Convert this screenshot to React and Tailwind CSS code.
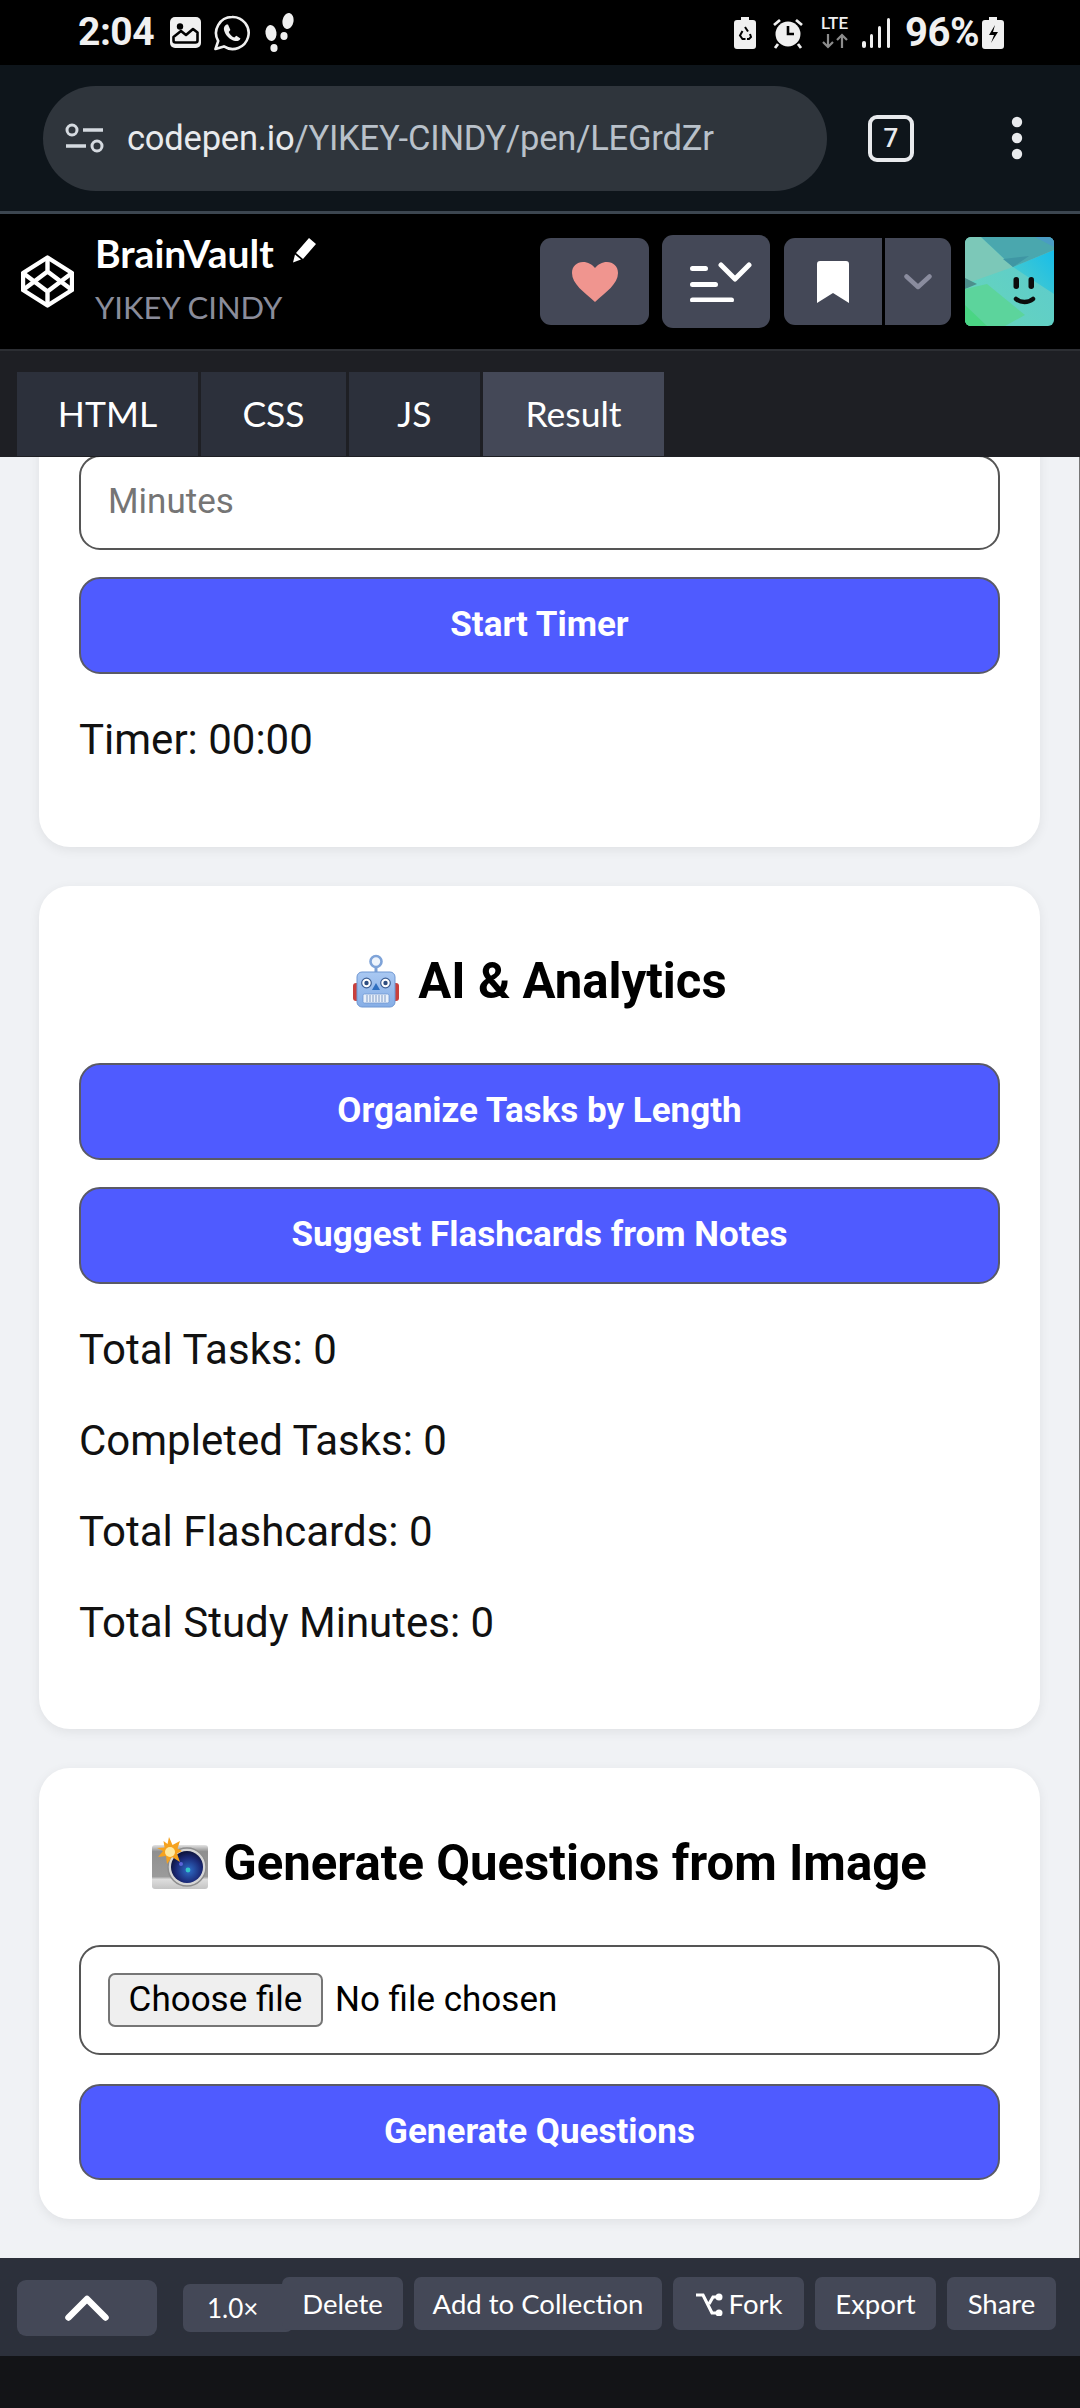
import React from "react";

const lato = "font-['Lato','Liberation_Sans',sans-serif]";
const roboto = "font-['Roboto','Liberation_Sans',sans-serif]";

function Robot() {
  return (
    <svg width="48" height="54" viewBox="0 0 48 54" className="shrink-0">
      <defs>
        <linearGradient id="rb" x1="0" y1="0" x2="0" y2="1"><stop offset="0" stopColor="#a9c8f2" /><stop offset="1" stopColor="#86aee6" /></linearGradient>
      </defs>
      <rect x="1" y="29" width="7" height="18" rx="3" fill="#c9403c" />
      <rect x="40" y="29" width="7" height="18" rx="3" fill="#c9403c" />
      <rect x="22.5" y="12" width="3" height="8" fill="#7c9fd4" />
      <circle cx="24" cy="7.5" r="5.5" fill="#eef4fc" stroke="#7ea3d8" strokeWidth="2.6" />
      <rect x="5" y="18" width="38" height="35" rx="5" fill="url(#rb)" stroke="#6f97d2" strokeWidth="1" />
      <circle cx="14.5" cy="29" r="4.8" fill="#fff" stroke="#3d5f94" strokeWidth="1.2" />
      <circle cx="14.5" cy="29" r="2.2" fill="#2f4e80" />
      <circle cx="33.5" cy="29" r="4.8" fill="#fff" stroke="#3d5f94" strokeWidth="1.2" />
      <circle cx="33.5" cy="29" r="2.2" fill="#2f4e80" />
      <path d="M24 29l4 7h-8z" fill="#2f6fc0" />
      <rect x="11" y="40" width="26" height="9" rx="1.5" fill="#e9f0fa" stroke="#6f97d2" strokeWidth=".8" />
      <path d="M15 41v7M18 41v7M21 41v7M24 41v7M27 41v7M30 41v7M33 41v7" stroke="#7f9bc6" strokeWidth="1" />
    </svg>
  );
}

function Camera() {
  return (
    <svg width="56" height="52" viewBox="0 0 56 52" className="shrink-0">
      <defs>
        <linearGradient id="cb" x1="0" y1="0" x2="0" y2="1"><stop offset="0" stopColor="#e4e4e4" /><stop offset=".15" stopColor="#8f8f8f" /><stop offset=".72" stopColor="#9b9b9b" /><stop offset=".78" stopColor="#dedede" /><stop offset="1" stopColor="#c4c4c4" /></linearGradient>
        <radialGradient id="cl" cx=".55" cy=".6" r=".6"><stop offset="0" stopColor="#2f6fc9" /><stop offset=".65" stopColor="#1b2a78" /><stop offset="1" stopColor="#0d1238" /></radialGradient>
      </defs>
      <rect x="0" y="8" width="56" height="44" rx="3" fill="url(#cb)" />
      <circle cx="35" cy="30" r="19" fill="#d6d6d6" stroke="#8d8d8d" strokeWidth="1.5" />
      <circle cx="35" cy="30" r="16" fill="url(#cl)" />
      <circle cx="36" cy="33" r="2.4" fill="#33c5c9" />
      <circle cx="29" cy="27" r="2" fill="#5a63d8" />
      <path d="M17 0l3.5 8L28 4l-2.5 7.5L30 14l-5 2.5 3 8.5-8-5-5 7-1-8-8 1 5-6L5 11l7.5-.5-1-6.5 4 3z" fill="#f6a21e" />
      <circle cx="18" cy="15" r="5" fill="#ffe9a0" />
    </svg>
  );
}

function Btn({ children, className = "" }) {
  return (
    <button className={`block w-full h-[97px] rounded-[21px] border-2 border-[#5a5a66] bg-[#4f5bff] text-white text-[35px] font-bold ${className}`}>
      {children}
    </button>
  );
}

function Title({ icon, gap, children }) {
  return (
    <h2 className={`mt-[27px] mb-[54px] h-[56px] flex items-center justify-center text-[49.14px] leading-[56px] font-bold text-black ${gap}`}>
      {icon}
      <span>{children}</span>
    </h2>
  );
}

function Stat({ children, className = "" }) {
  return <p className={`text-[42px] leading-[48px] text-[#111] ${className}`}>{children}</p>;
}

function Card({ children, className = "" }) {
  return (
    <section className={`shrink-0 bg-white rounded-[31px] px-[40px] pt-[40px] pb-[40px] shadow-[0_3px_12px_rgba(0,0,0,0.07)] ${className}`}>
      {children}
    </section>
  );
}

function HeadBtn({ className = "", children }) {
  return <div className={`bg-[#444857] flex items-center justify-center ${className}`}>{children}</div>;
}

function Tab({ w, active, children }) {
  return (
    <div className={`${w} ${active ? "bg-[#444857]" : "bg-[#2c303b]"} h-[84px] flex items-center justify-center text-[35.5px] text-white`}>
      {children}
    </div>
  );
}

function FootBtn({ className = "", children }) {
  return (
    <div className={`relative h-[53px] rounded-[7px] bg-[#444857] flex items-center justify-center text-[27.5px] text-white ${className}`}>
      {children}
    </div>
  );
}

export default function App() {
  return (
    <div className={`w-[1080px] h-[2408px] flex flex-col overflow-hidden bg-black ${roboto}`}>
      {/* status bar */}
      <div className="h-[65px] shrink-0 bg-black flex items-center pl-[78px] pr-[76px] text-[#f0f0f0]">
        <span className="text-[39px] font-bold leading-none tracking-[-0.5px]">2:04</span>
        <svg width="31" height="31" viewBox="0 0 31 31" className="ml-[16px]">
          <rect width="31" height="31" rx="5" fill="#f0f0f0" />
          <circle cx="10" cy="9.500" r="3.200" fill="#000" />
          <path d="M3.500 20l7.500-6 5 4 7-6 4.500 3.500v8a2 2 0 0 1-2 2H5.500a2 2 0 0 1-2-2z" fill="#f0f0f0" stroke="#000" strokeWidth="2.600" strokeLinejoin="round" />
        </svg>
        <svg width="36" height="36" viewBox="0 0 36 36" className="ml-[13px]">
          <path d="M18 2a16 16 0 0 0-13.800 24L1.500 34l8.400-2.600A16 16 0 1 0 18 2z" fill="none" stroke="#f0f0f0" strokeWidth="2.600" strokeLinejoin="round" />
          <path d="M12.500 9.500c-2 1-3 3-2.500 5.500 1 5 6 10 11 11 2.600.5 4.600-.6 5.500-2.600l-4.200-2.600-2 1.700c-2.400-1-4.600-3.200-5.600-5.600l1.700-2-2.400-5.400z" fill="#f0f0f0" />
        </svg>
        <svg width="31" height="40" viewBox="0 0 31 40" className="ml-[14px]">
          <ellipse cx="7" cy="20" rx="5.500" ry="8" fill="#f0f0f0" transform="rotate(-8 7 20)" />
          <ellipse cx="10" cy="35" rx="3.600" ry="4" fill="#f0f0f0" />
          <ellipse cx="24" cy="8" rx="5.500" ry="8" fill="#f0f0f0" transform="rotate(10 24 8)" />
          <ellipse cx="20" cy="23" rx="3.600" ry="4" fill="#f0f0f0" />
        </svg>
        <div className="ml-auto flex items-center">
          <svg width="22" height="32" viewBox="0 0 22 32">
            <path d="M7 0h8v3h4a3 3 0 0 1 3 3v23a3 3 0 0 1-3 3H3a3 3 0 0 1-3-3V6a3 3 0 0 1 3-3h4z" fill="#f0f0f0" />
            <path d="M11 10l3 4.500M8.500 14L6 18.500 8.500 22h3M16 17l1 3-2 2h-2" fill="none" stroke="#000" strokeWidth="2" />
          </svg>
          <svg width="32" height="32" viewBox="0 0 32 32" className="ml-[16px]">
            <circle cx="16" cy="17" r="12.500" fill="#f0f0f0" />
            <path d="M16 9v8h6" fill="none" stroke="#000" strokeWidth="2.600" />
            <path d="M2 8l6-5M30 8l-6-5M6 27l-3 4M26 27l3 4" stroke="#f0f0f0" strokeWidth="2.800" />
          </svg>
          <div className="ml-[15px] w-[31px] h-[33px] flex flex-col items-center">
            <span className="text-[17px] leading-[15px] font-medium text-[#f0f0f0]">LTE</span>
            <svg width="30" height="16" viewBox="0 0 30 16" className="mt-[2px]">
              <path d="M8 1v13M3 9l5 5 5-5" fill="none" stroke="#8c8c8c" strokeWidth="2.200" />
              <path d="M22 15V2M17 7l5-5 5 5" fill="none" stroke="#8c8c8c" strokeWidth="2.200" />
            </svg>
          </div>
          <svg width="28" height="30" viewBox="0 0 28 30" className="ml-[12px]">
            <rect x="0" y="23" width="4" height="7" rx="2" fill="#f0f0f0" />
            <rect x="8" y="16" width="3" height="14" rx="1.500" fill="#f0f0f0" />
            <rect x="16" y="8" width="3" height="22" rx="1.500" fill="#f0f0f0" />
            <rect x="25" y="0" width="3" height="30" rx="1.500" fill="#f0f0f0" />
          </svg>
          <span className="ml-[15px] text-[40px] font-bold leading-none w-[76px] tracking-[-0.5px]">96%</span>
          <svg width="22" height="32" viewBox="0 0 22 32" className="ml-[1px]">
            <path d="M7 0h8v3h4a3 3 0 0 1 3 3v23a3 3 0 0 1-3 3H3a3 3 0 0 1-3-3V6a3 3 0 0 1 3-3h4z" fill="#f0f0f0" />
            <path d="M13 8l-6 10h5l-3 8 7-11h-5z" fill="#000" />
          </svg>
        </div>
      </div>

      {/* browser bar */}
      <div className="h-[149px] shrink-0 bg-[#0e151b] flex items-center pl-[43px] border-b-[3px] border-[#3c4650]">
        <div className="w-[784px] h-[105px] rounded-[53px] bg-[#2f353c] flex items-center pl-[22px]">
          <svg width="40" height="32" viewBox="0 0 40 32">
            <circle cx="7" cy="8" r="5" fill="none" stroke="#d5dae0" strokeWidth="3" />
            <path d="M18 8h20M1 24h20" stroke="#d5dae0" strokeWidth="3.400" />
            <circle cx="32" cy="24" r="5" fill="none" stroke="#d5dae0" strokeWidth="3" />
          </svg>
          <span className="ml-[22px] text-[34.5px] leading-none text-[#b9c1ca] whitespace-nowrap tracking-[-0.2px]">
            <span className="text-[#e8eaed]">codepen.io</span>/YIKEY-CINDY/pen/LEGrdZr
          </span>
        </div>
        <div className="ml-[41px] w-[46px] h-[47px] rounded-[9px] border-[4px] border-[#e8eaed] flex items-center justify-center text-[26px] font-medium text-[#e8eaed]">7</div>
        <svg width="12" height="46" viewBox="0 0 12 46" className="ml-[97px]">
          <circle cx="6" cy="7" r="5.200" fill="#e8eaed" />
          <circle cx="6" cy="23" r="5.200" fill="#e8eaed" />
          <circle cx="6" cy="39" r="5.200" fill="#e8eaed" />
        </svg>
      </div>

      {/* pen header */}
      <div className={`h-[135px] shrink-0 bg-black flex items-center pl-[21px] pr-[26px] ${lato}`}>
        <svg width="53" height="53" viewBox="0 0 53 53" className="shrink-0" fill="none" stroke="#fff" strokeWidth="4.400" strokeLinejoin="round">
          <path d="M26.500 2.500L51 18v17L26.500 50.500 2 35V18z" />
          <path d="M26.500 2.500v14M26.500 36.500v14M2 18l24.500 18.500L51 18M2 35l24.500-18.500L51 35" />
        </svg>
        <div className="ml-[21px] mb-[8px] flex flex-col">
          <div className="flex items-center h-[46px]">
            <span className="text-[39px] font-bold leading-none text-white">BrainVault</span>
            <svg width="28" height="28" viewBox="0 0 28 28" className="ml-[16px] mb-[6px]">
              <path d="M19 1l7 6-13 15-7-6zM5 17.500l6 5-8 3z" fill="#fff" />
            </svg>
          </div>
          <span className="mt-[12px] text-[31px] leading-[36px] text-[#8a8c9a]">YIKEY CINDY</span>
        </div>
        <div className="ml-auto flex items-center">
          <HeadBtn className="w-[109px] h-[87px] rounded-[11px]">
            <svg width="46" height="40" viewBox="0 0 46 40">
              <path d="M23 40C12 30 0 22 0 11 0 4 5 0 11 0c5 0 9 2.500 12 6 3-3.500 7-6 12-6 6 0 11 4 11 11 0 11-12 19-23 29z" fill="#f0958f" />
            </svg>
          </HeadBtn>
          <HeadBtn className="ml-[13px] w-[108px] h-[93px] rounded-[11px]">
            <svg width="62" height="40" viewBox="0 0 62 40" className="ml-[9px]">
              <path d="M2.500 6.500h13M2.500 22.500h23M2.500 38h39" fill="none" stroke="#fff" strokeWidth="5" strokeLinecap="round" />
              <path d="M31 3l14 14L59 3" fill="none" stroke="#fff" strokeWidth="5" strokeLinecap="round" strokeLinejoin="round" />
            </svg>
          </HeadBtn>
          <HeadBtn className="ml-[14px] w-[98px] h-[87px] rounded-l-[11px]">
            <svg width="32" height="42" viewBox="0 0 32 42">
              <path d="M3 0h26a3 3 0 0 1 3 3v39L16 32 0 42V3a3 3 0 0 1 3-3z" fill="#fff" />
            </svg>
          </HeadBtn>
          <HeadBtn className="ml-[3px] w-[66px] h-[87px] rounded-r-[11px]">
            <svg width="28" height="16" viewBox="0 0 28 16">
              <path d="M2.500 2.500L14 13 25.500 2.500" fill="none" stroke="#8a8c9e" strokeWidth="4.500" strokeLinecap="round" strokeLinejoin="round" />
            </svg>
          </HeadBtn>
          <svg width="89" height="89" viewBox="0 0 89 89" className="ml-[14px] rounded-[6px]">
            <defs>
              <linearGradient id="av" x1="1" y1="0" x2="0" y2="1"><stop offset="0" stopColor="#5cc9d0" /><stop offset="1" stopColor="#66d6ba" /></linearGradient>
              <linearGradient id="ab" x1="1" y1="0" x2="0" y2="1"><stop offset="0" stopColor="#16bdea" /><stop offset="1" stopColor="#52cdc8" /></linearGradient>
            </defs>
            <rect width="89" height="89" fill="url(#av)" />
            <path d="M89 13v44L60 38 48 30z" fill="url(#ab)" />
            <path d="M0 0h16l32 30L0 47z" fill="#7cc8b8" />
            <path d="M16 0h73v13L48 30z" fill="#4aa7ae" />
            <path d="M70 0h19v10z" fill="#4a9cc4" />
            <path d="M38 22l26-3-16 11z" fill="#3f96a4" />
            <path d="M0 41l12 6-12 5z" fill="#4d8f8c" />
            <path d="M0 52l22-5 38 31-20 11H0z" fill="#5cd49c" />
            <path d="M0 68l22 21H0z" fill="#4ad584" />
            <rect x="48.500" y="40" width="5.500" height="12" rx="2.700" fill="#0c0c0c" />
            <rect x="63.500" y="40" width="5.500" height="12" rx="2.700" fill="#0c0c0c" />
            <path d="M51 62c5 4 12 4 17 0" fill="none" stroke="#0c0c0c" strokeWidth="4.500" strokeLinecap="round" />
          </svg>
        </div>
      </div>

      {/* tabs */}
      <div className={`h-[108px] shrink-0 bg-[#1e1f24] border-t-[2px] border-[#2c2e33] pt-[21px] pl-[17px] flex gap-[3px] ${lato}`}>
        <Tab w="w-[181px]">HTML</Tab>
        <Tab w="w-[145px]">CSS</Tab>
        <Tab w="w-[131px]">JS</Tab>
        <Tab w="w-[181px]" active>Result</Tab>
      </div>

      {/* result */}
      <main className="flex-1 min-h-0 overflow-hidden bg-[#f0f2f5] border-r border-[#777] px-[39px] pb-[39px] flex flex-col justify-end gap-[39px]">
        <Card>
          <div className="h-[95px] rounded-[21px] border-2 border-[#555] flex items-center pl-[27px] text-[35px] text-[#757575]">Minutes</div>
          <Btn className="mt-[27px]">Start Timer</Btn>
          <Stat className="mt-[42px] mb-[43px]">Timer: 00:00</Stat>
        </Card>

        <Card>
          <Title icon={<Robot />} gap="gap-[18px]">AI &amp; Analytics</Title>
          <Btn>Organize Tasks by Length</Btn>
          <Btn className="mt-[27px]">Suggest Flashcards from Notes</Btn>
          <Stat className="mt-[42px]">Total Tasks: 0</Stat>
          <Stat className="mt-[43px]">Completed Tasks: 0</Stat>
          <Stat className="mt-[43px]">Total Flashcards: 0</Stat>
          <Stat className="mt-[43px] mb-[42px]">Total Study Minutes: 0</Stat>
        </Card>

        <Card className="!pb-[39px]">
          <Title icon={<Camera />} gap="gap-[15px]">Generate Questions from Image</Title>
          <div className="h-[110px] rounded-[21px] border-2 border-[#555] flex items-center pl-[27px] text-[35px] text-black">
            <span className="w-[215px] h-[54px] rounded-[7px] border-[2.5px] border-[#767676] bg-[#efefef] flex items-center justify-center">Choose file</span>
            <span className="ml-[12px]">No file chosen</span>
          </div>
          <Btn className="mt-[29px] !h-[96px]">Generate Questions</Btn>
        </Card>
      </main>

      {/* footer */}
      <div className={`h-[98px] shrink-0 bg-[#2c303b] flex items-start pl-[17px] ${lato}`}>
        <div className="mt-[22px] w-[140px] h-[56px] rounded-[9px] bg-[#444857] flex items-center justify-center">
          <svg width="44" height="26" viewBox="0 0 44 26">
            <path d="M3.500 22.500L22 4l18.500 18.500" fill="none" stroke="#fff" strokeWidth="6.500" strokeLinecap="round" strokeLinejoin="round" />
          </svg>
        </div>
        <div className="mt-[26px] ml-[26px] w-[110px] h-[48px] rounded-[7px] bg-[#444857] flex items-center pl-[24px] text-[26px] text-white">1.0×</div>
        <div className="mt-[19px] -ml-[11px] flex gap-[11px]">
          <FootBtn className="w-[121px]">Delete</FootBtn>
          <FootBtn className="w-[248px]">Add to Collection</FootBtn>
          <FootBtn className="w-[131px]">
            <svg width="28" height="24" viewBox="0 0 28 24" className="mr-[6px]">
              <path d="M1 3h7l9 18h4M14 12l4-7h4" fill="none" stroke="#fff" strokeWidth="3.200" />
              <circle cx="24" cy="5" r="3.500" fill="#fff" />
              <circle cx="24" cy="21" r="3.500" fill="#fff" />
            </svg>
            Fork
          </FootBtn>
          <FootBtn className="w-[121px]">Export</FootBtn>
          <FootBtn className="w-[109px]">Share</FootBtn>
        </div>
      </div>

      {/* below */}
      <div className="h-[52px] shrink-0 bg-[#131417]" />
    </div>
  );
}
